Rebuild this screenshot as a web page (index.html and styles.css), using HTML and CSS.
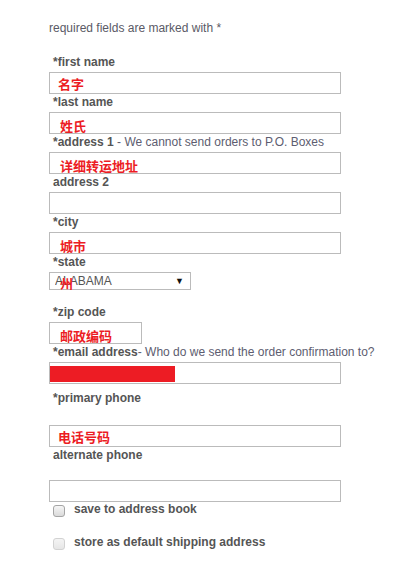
FILE: index.html
```html
<!DOCTYPE html>
<html lang="en">
<head>
  <meta charset="utf-8" />
  <title>Shipping address</title>
  <meta name="viewport" content="width=device-width, initial-scale=1" />
  <link rel="stylesheet" href="styles.css">
</head>
<body>
  <form class="address-form">
    <p class="intro">required fields are marked with *</p>

    <div class="field">
      <label class="label" for="first-name">*first name</label>
      <div class="box">
        <input class="text" type="text" id="first-name">
        <span class="note">名字</span>
      </div>
    </div>

    <div class="field">
      <label class="label" for="last-name">*last name</label>
      <div class="box">
        <input class="text" type="text" id="last-name">
        <span class="note note-low">姓氏</span>
      </div>
    </div>

    <div class="field">
      <label class="label" for="address-1">*address 1 <span class="hint">- We cannot send orders to P.O. Boxes</span></label>
      <div class="box">
        <input class="text" type="text" id="address-1">
        <span class="note note-low">详细转运地址</span>
      </div>
    </div>

    <div class="field">
      <label class="label" for="address-2">address 2</label>
      <div class="box">
        <input class="text" type="text" id="address-2">
      </div>
    </div>

    <div class="field">
      <label class="label" for="city">*city</label>
      <div class="box">
        <input class="text" type="text" id="city">
        <span class="note note-low">城市</span>
      </div>
    </div>

    <div class="field field-state">
      <label class="label" for="state">*state</label>
      <div class="box box-select">
        <select class="select" id="state">
          <option>ALABAMA</option>
          <option>ALASKA</option>
          <option>ARIZONA</option>
        </select>
        <span class="arrow">&#9660;</span>
        <span class="note note-state">州</span>
      </div>
    </div>

    <div class="field">
      <label class="label" for="zip">*zip code</label>
      <div class="box box-short">
        <input class="text" type="text" id="zip">
        <span class="note note-low">邮政编码</span>
      </div>
    </div>

    <div class="field">
      <label class="label" for="email">*email address<span class="hint">- Who do we send the order confirmation to?</span></label>
      <div class="box">
        <input class="text" type="text" id="email">
        <span class="redact"></span>
      </div>
    </div>

    <div class="field field-phone">
      <label class="label" for="phone">*primary phone</label>
      <div class="box">
        <input class="text" type="text" id="phone">
        <span class="note">电话号码</span>
      </div>
    </div>

    <div class="field field-alt">
      <label class="label" for="alt-phone">alternate phone</label>
      <div class="box">
        <input class="text" type="text" id="alt-phone">
      </div>
    </div>

    <label class="check">
      <input type="checkbox" class="tick">
      <span>save to address book</span>
    </label>
    <label class="check">
      <input type="checkbox" class="tick" disabled>
      <span>store as default shipping address</span>
    </label>
  </form>
</body>
</html>
```

FILE: styles.css
```css
body {
  margin: 0;
  background-color: #fff;
  font-family: "Liberation Sans", Arial, sans-serif;
  font-size: 12px;
  color: #555;
}

.address-form {
  width: 292px;
  padding: 20px 0 0 49px;
}

.intro {
  margin: 0 0 18px;
  line-height: 16px;
  color: #5a5a66;
}

.label {
  display: block;
  height: 18px;
  padding: 1px 0 3px 4px;
  box-sizing: border-box;
  line-height: 14px;
  font-weight: bold;
  color: #555;
  white-space: nowrap;
}

.hint {
  font-weight: normal;
  color: #5d5d70;
}

.box {
  position: relative;
  width: 292px;
}

.box-short {
  width: 93px;
}

.box-select {
  width: 142px;
}

.text {
  display: block;
  width: 100%;
  height: 22px;
  margin: 0;
  padding: 0 4px;
  box-sizing: border-box;
  border: 1px solid #bbb;
  font: inherit;
}

.select {
  display: block;
  width: 100%;
  height: 18px;
  margin: 0 0 14px;
  padding: 0 5px;
  border: 1px solid #bbb;
  border-radius: 0;
  background-color: #fff;
  appearance: none;
  -webkit-appearance: none;
  font: inherit;
  color: #555;
}

.arrow {
  position: absolute;
  top: 3px;
  right: 7px;
  font-size: 9px;
  line-height: 12px;
  color: #111;
  pointer-events: none;
}

.note {
  position: absolute;
  top: 5px;
  left: 9px;
  font-family: "Noto Sans CJK SC", sans-serif;
  font-size: 13px;
  font-weight: bold;
  line-height: 13px;
  color: #ec1c24;
  pointer-events: none;
}

.note-low {
  top: 7px;
  left: 11px;
}

.note-state {
  top: 4px;
  left: 11px;
}

.redact {
  position: absolute;
  top: 4px;
  left: 1px;
  width: 125px;
  height: 16px;
  background-color: #ed1c24;
}

.field-phone {
  margin-top: 6px;
}

.field-phone .label {
  margin-bottom: 17px;
}

.field-alt .label {
  margin-bottom: 15px;
}

.check {
  display: flex;
  align-items: flex-start;
  gap: 9px;
  height: 33px;
  padding-left: 4px;
  line-height: 14px;
  font-weight: bold;
  color: #555;
}

.tick {
  width: 12px;
  height: 12px;
  margin: 3px 0 0;
  border: 1px solid #a5a5a5;
  border-radius: 3px;
  background: linear-gradient(#f6f6f6, #dadada);
  appearance: none;
  -webkit-appearance: none;
}

.tick:disabled {
  border-color: #d2d2d2;
  background: linear-gradient(#f4f4f4, #e6e6e6);
}
```
